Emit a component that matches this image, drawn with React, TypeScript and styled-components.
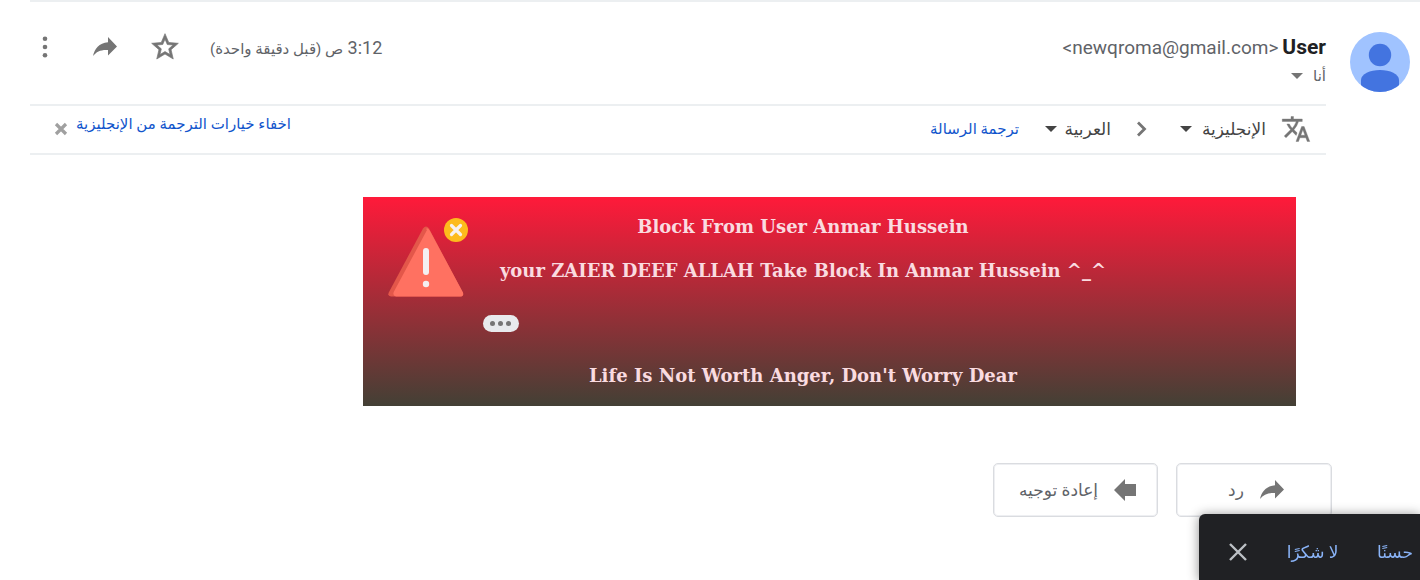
import React from "react";
import styled, { createGlobalStyle } from "styled-components";
import { MdStarBorder, MdTranslate } from "react-icons/md";

const GlobalStyle = createGlobalStyle`
  *, *::before, *::after { box-sizing: border-box; }
  body {
    margin: 0;
    background: #fff;
    color: #5f6368;
    font-family: Roboto, "DejaVu Sans", sans-serif;
    font-size: 17px;
  }
  button {
    margin: 0;
    padding: 0;
    border: 0;
    background: none;
    color: inherit;
    font: inherit;
    cursor: pointer;
  }
`;

const Message = styled.article`
  display: grid;
  grid-template-columns: 60px minmax(0, 1fr);
  column-gap: 24px;
  margin-left: 30px;
  padding-right: 10px;
  border-top: 2px solid #eceff1;
`;

const Avatar = styled.svg`
  width: 60px;
  height: 60px;
  margin-top: 30px;
`;

const Header = styled.header`
  display: flex;
  justify-content: space-between;
  align-items: flex-start;
  height: 102px;
  padding-top: 30px;
`;

const Sender = styled.div`
  display: flex;
  flex-direction: column;
  gap: 2px;
`;

const SenderLine = styled.div`
  direction: ltr;
  display: flex;
  align-items: baseline;
  gap: 4px;
  height: 30px;
  font-size: 19px;
  line-height: 30px;
`;

const SenderName = styled.h3`
  margin: 0;
  color: #202124;
  font-size: 21px;
  font-weight: 700;
`;

const Recipient = styled.button`
  display: flex;
  align-items: center;
  gap: 10px;
  height: 24px;
  font-size: 15px;
`;

const Actions = styled.div`
  direction: ltr;
  display: flex;
  align-items: center;
  gap: 30px;
  height: 30px;
`;

const IconButton = styled.button`
  display: flex;
  align-items: center;
  justify-content: center;
  width: 30px;
  height: 30px;
  color: #757575;

  svg { flex: none; }
`;

const Star = styled(MdStarBorder)`
  path:not([fill="none"]) {
    stroke: currentColor;
    stroke-width: 0.5px;
  }
  path[fill="none"] { stroke: none; }
`;

const TranslateIcon = styled(MdTranslate)`
  path:not([fill="none"]) {
    stroke: currentColor;
    stroke-width: 0.3px;
  }
  path[fill="none"] { stroke: none; }
`;

const Time = styled.time`
  direction: rtl;
  font-size: 18px;
  white-space: nowrap;

  small { font-size: 15px; }
`;

const TranslateBar = styled.section`
  display: flex;
  justify-content: space-between;
  align-items: center;
  height: 51px;
  padding: 0 15px 2px 24px;
  border: solid #eceff1;
  border-width: 2px 0;
`;

const Languages = styled.div`
  display: flex;
  align-items: center;
  gap: 26px;
  color: #757575;
`;

const SourceLanguage = styled.div`
  display: flex;
  align-items: center;
  gap: 15px;
`;

const SelectBox = styled.label<{ $width: number }>`
  position: relative;
  display: flex;
  align-items: center;
  width: ${(p) => p.$width}px;
  color: #444;

  select {
    width: 100%;
    height: 30px;
    margin: 0;
    padding: 0;
    border: 0;
    background: none;
    color: inherit;
    font: inherit;
    appearance: none;
  }

  svg {
    position: absolute;
    left: 0;
    pointer-events: none;
  }
`;

const TextLink = styled.a`
  color: #1155cc;
  font-size: 15px;
  line-height: 24px;
  text-decoration: none;
  white-space: nowrap;
`;

const HideOptions = styled.div`
  display: flex;
  align-items: flex-end;
  gap: 8px;
  padding-bottom: 9px;
`;

const CloseSmall = styled.button`
  display: flex;
  color: #a0a0a0;
`;

const Banner = styled.section`
  direction: ltr;
  display: grid;
  grid-template-columns: 80px minmax(0, 1fr);
  column-gap: 15px;
  width: 72%;
  margin: 42px 30px 0 auto;
  padding: 15px 173px 15px 25px;
  background: linear-gradient(#ff1a3a, #434035);
  color: #fadbe0;
  font-family: Georgia, "DejaVu Serif", serif;
`;

const Warning = styled.svg`
  width: 80px;
  height: 80px;
  margin-top: 6px;
`;

const BannerText = styled.div`
  display: flex;
  flex-direction: column;
  align-items: center;
`;

const Line = styled.p`
  margin: 0 0 14px;
  font-size: 18px;
  font-weight: 700;
  line-height: 30px;
  white-space: nowrap;

  &:last-child { margin: 29px 0 0; }
`;

const Ellipsis = styled.button`
  display: flex;
  align-items: center;
  justify-content: center;
  gap: 3px;
  align-self: flex-start;
  width: 36px;
  height: 17px;
  margin-top: 15px;
  border-radius: 9px;
  background: #e8eaed;

  i {
    width: 5px;
    height: 5px;
    border-radius: 50%;
    background: #757575;
  }
`;

const Replies = styled.footer`
  display: flex;
  gap: 18px;
  padding: 57px 88px 0 30px;
`;

const ReplyButton = styled.button<{ $width: number }>`
  display: flex;
  align-items: center;
  justify-content: center;
  gap: 16px;
  width: ${(p) => p.$width}px;
  height: 54px;
  padding-left: 4px;
  border: 1px solid #dadce0;
  box-shadow: inset 0 0 0 1px #eeeff2;
  border-radius: 5px;

  svg { flex: none; color: #757575; }
`;

const Toast = styled.aside`
  position: fixed;
  right: 0;
  bottom: 0;
  display: flex;
  align-items: center;
  justify-content: space-between;
  width: 221px;
  height: 66px;
  padding: 10px 7px 0 29px;
  border-radius: 6px 0 0 0;
  background: #202124;
  box-shadow: 0 1px 12px rgba(0, 0, 0, 0.45);
  color: #8ab4f8;
`;

const Dismiss = styled.button`
  display: flex;
  color: #bdc1c6;
`;

const Caret = ({ color = "#444" }: { color?: string }) => (
  <svg width="12" height="6" viewBox="0 0 12 6" aria-hidden="true">
    <path d="M0 0h12L6 6z" fill={color} />
  </svg>
);

function LanguageSelect({ label, value, width }: { label: string; value: string; width: number }) {
  return (
    <SelectBox $width={width}>
      <select aria-label={label} defaultValue={value}>
        <option>{value}</option>
      </select>
      <Caret />
    </SelectBox>
  );
}

const ReplyArrow = () => (
  <svg width="24" height="20" viewBox="0 0 24 20" aria-hidden="true">
    <path d="M15 0l9 9.500-9 9V13C8 12.500 3.500 14.500 0 19 1.500 12 6 6 15 5.200z" fill="currentColor" />
  </svg>
);

const MoreDots = () => (
  <svg width="6" height="22" viewBox="0 0 6 22" fill="currentColor" aria-hidden="true">
    <circle cx="3" cy="2.700" r="2.300" />
    <circle cx="3" cy="11" r="2.300" />
    <circle cx="3" cy="19.300" r="2.300" />
  </svg>
);

export default function App() {
  return (
    <main dir="rtl" lang="ar">
      <GlobalStyle />
      <Message>
        <Avatar viewBox="0 0 60 60" role="img" aria-label="User">
          <defs>
            <clipPath id="avatar-circle"><circle cx="30" cy="30" r="30" /></clipPath>
          </defs>
          <circle cx="30" cy="30" r="30" fill="#a0c3ff" />
          <g fill="#4374e0" clipPath="url(#avatar-circle)">
            <circle cx="30" cy="23" r="11.200" />
            <path d="M11 60V48c0-6 9-10 19-10s19 4 19 10v12z" />
          </g>
        </Avatar>
        <div>
          <Header>
            <Sender>
              <SenderLine>
                <span>&lt;newqroma@gmail.com&gt;</span>
                <SenderName>User</SenderName>
              </SenderLine>
              <Recipient>أنا <Caret color="#757575" /></Recipient>
            </Sender>
            <Actions>
              <IconButton aria-label="المزيد"><MoreDots /></IconButton>
              <IconButton aria-label="رد"><ReplyArrow /></IconButton>
              <IconButton aria-label="تمييز بنجمة"><Star size={32} /></IconButton>
              <Time>3:12 <small>ص (قبل دقيقة واحدة)</small></Time>
            </Actions>
          </Header>
          <TranslateBar>
            <Languages>
              <SourceLanguage>
                <TranslateIcon size={30} />
                <LanguageSelect label="من" value="الإنجليزية" width={86} />
              </SourceLanguage>
              <svg width="17" height="16" viewBox="0 0 17 16" aria-hidden="true">
                <path d="M1 1.500L7.500 8 1 14.500" fill="none" stroke="#757575" strokeWidth="2.800" />
              </svg>
              <LanguageSelect label="إلى" value="العربية" width={66} />
              <TextLink href="#translate">ترجمة الرسالة</TextLink>
            </Languages>
            <HideOptions>
              <TextLink href="#hide">اخفاء خيارات الترجمة من الإنجليزية</TextLink>
              <CloseSmall aria-label="إغلاق">
                <svg width="14" height="14" viewBox="0 0 14 14" aria-hidden="true">
                  <path d="M2 2l10 10M12 2L2 12" stroke="currentColor" strokeWidth="3.200" />
                </svg>
              </CloseSmall>
            </HideOptions>
          </TranslateBar>
          <Banner>
            <Warning viewBox="0 0 80 80" aria-hidden="true">
              <path d="M35 10.500q3-4 6 0L75 75q1 3.500-3 3.500H3q-4-.5-2-4.500z" fill="#e3574a" />
              <path d="M38 11q2-2 4 2l33 61.500q1 4-3 4H8q-4-1-2-5l33-61.500z" fill="#ff7161" />
              <path d="M38 33v21" stroke="#f4eff2" strokeWidth="6" strokeLinecap="round" />
              <circle cx="38" cy="66" r="3.200" fill="#f4eff2" />
              <circle cx="68" cy="12" r="12" fill="#fdbb1c" />
              <path d="M63.500 7.500l9 9m0-9l-9 9" stroke="#f8f1ee" strokeWidth="3.200" strokeLinecap="round" />
            </Warning>
            <BannerText>
              <Line>Block From User Anmar Hussein</Line>
              <Line>your ZAIER DEEF ALLAH Take Block In Anmar Hussein ^_^</Line>
              <Ellipsis aria-label="Show trimmed content"><i /><i /><i /></Ellipsis>
              <Line>Life Is Not Worth Anger, Don't Worry Dear</Line>
            </BannerText>
          </Banner>
        </div>
      </Message>
      <Replies>
        <ReplyButton $width={156}><ReplyArrow />رد</ReplyButton>
        <ReplyButton $width={165}>
          <svg width="22" height="22" viewBox="0 0 22 22" aria-hidden="true">
            <path d="M0 11L11 0v5h11v12H11v5z" fill="currentColor" />
          </svg>
          إعادة توجيه
        </ReplyButton>
      </Replies>
      <Toast>
        <button>حسنًا</button>
        <button>لا شكرًا</button>
        <Dismiss aria-label="إغلاق">
          <svg width="20" height="20" viewBox="0 0 20 20" aria-hidden="true">
            <path d="M2 2l16 16M18 2L2 18" stroke="currentColor" strokeWidth="2.400" />
          </svg>
        </Dismiss>
      </Toast>
    </main>
  );
}
